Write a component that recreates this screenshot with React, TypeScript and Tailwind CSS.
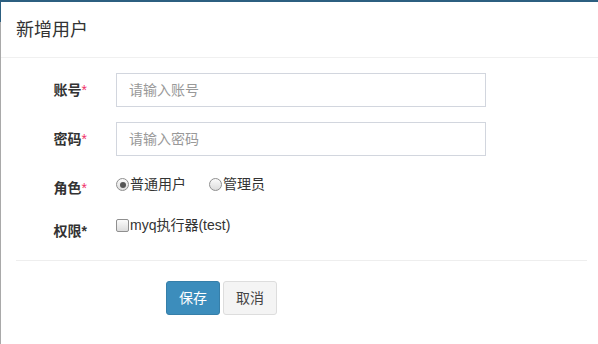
import React from 'react'

const font = { fontFamily: '"Liberation Sans", "Noto Sans CJK SC", sans-serif' }

const Label: React.FC<{ text: string; red?: boolean }> = ({ text, red = true }) => (
  <div className="w-[71px] shrink-0 text-right text-[14px] font-bold text-[#333]">
    {text}
    <span className={red ? 'text-[#f0306a] font-normal' : 'text-[#333]'}>*</span>
  </div>
)

const Radio: React.FC<{ checked?: boolean; label: string }> = ({ checked, label }) => (
  <label className="flex items-center text-[14px] text-[#333]">
    <span className="w-[13px] h-[13px] rounded-full border border-[#8f8f8f] bg-gradient-to-b from-[#fbfbfb] to-[#dcdcdc] flex items-center justify-center">
      {checked && <span className="w-[6px] h-[6px] rounded-full bg-[#555]" />}
    </span>
    <span className="ml-[1px]">{label}</span>
  </label>
)

export default function App() {
  return (
    <div className="w-[598px] h-[344px] bg-white flex flex-col overflow-hidden" style={font}>
      {/* top edge of page behind modal */}
      <div className="h-[2px] bg-[#2c5f80]" />
      <div className="flex flex-1">
        <div className="w-[1px] flex flex-col">
          <div className="h-[20px] bg-[#2c5f80]" />
          <div className="flex-1 bg-[#a9a9a9]" />
        </div>

        <div className="flex-1 flex flex-col">
          {/* Header */}
          <div className="h-[56px] px-[15px] flex items-center border-b border-[#f0f0f0]">
            <h4 className="text-[18px] text-[#333] leading-none">新增用户</h4>
          </div>

          {/* Body */}
          <div className="pl-[15px] pr-[11px] pt-[15px]">
            <div className="flex items-center h-[34px]">
              <Label text="账号" />
              <input
                placeholder="请输入账号"
                className="ml-[29px] w-[370px] h-[34px] border border-[#d2d6de] px-[12px] text-[14px] placeholder-[#999] outline-none"
              />
            </div>
            <div className="flex items-center h-[34px] mt-[15px]">
              <Label text="密码" />
              <input
                type="password"
                placeholder="请输入密码"
                className="ml-[29px] w-[370px] h-[34px] border border-[#d2d6de] px-[12px] text-[14px] placeholder-[#999] outline-none"
              />
            </div>

            <div className="flex h-[43px] mt-[14px]">
              <div className="pt-[8px]">
                <Label text="角色" />
              </div>
              <div className="ml-[29px] pt-[4px] flex gap-[23px] h-fit">
                <Radio checked label="普通用户" />
                <Radio label="管理员" />
              </div>
            </div>

            <div className="flex h-[32px]">
              <div className="pt-[8px]">
                <Label text="权限" red={false} />
              </div>
              <label className="ml-[29px] pt-[2px] flex items-center h-fit text-[14px] text-[#333]">
                <span className="w-[13px] h-[13px] rounded-[2px] border border-[#8f8f8f] bg-gradient-to-b from-[#fbfbfb] to-[#dcdcdc]" />
                <span className="ml-[1px]">myq执行器(test)</span>
              </label>
            </div>

            <div className="mt-[15px] border-t border-[#eee]" />
          </div>

          {/* Footer */}
          <div className="pl-[165px] pt-[20px] flex gap-[3px]">
            <button className="w-[54px] h-[34px] rounded-[3px] bg-[#3c8dbc] border border-[#367fa9] text-white text-[14px]">
              保存
            </button>
            <button className="w-[54px] h-[34px] rounded-[3px] bg-[#f4f4f4] border border-[#ddd] text-[#444] text-[14px]">
              取消
            </button>
          </div>
        </div>
      </div>
    </div>
  )
}
